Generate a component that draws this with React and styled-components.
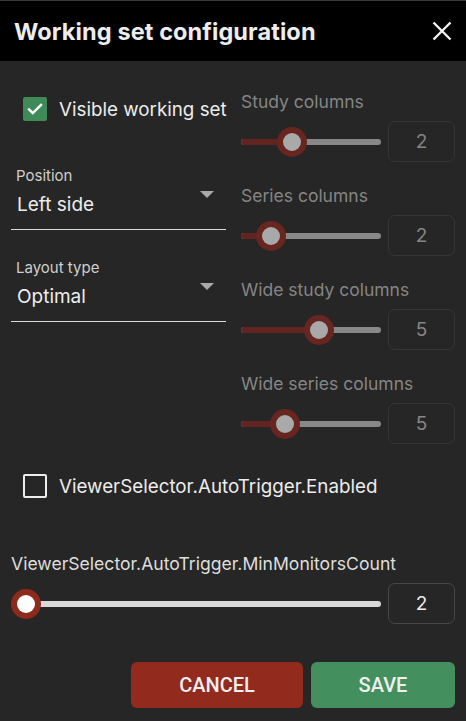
import React from 'react';
import styled, { createGlobalStyle } from 'styled-components';

const GlobalStyle = createGlobalStyle`
  html, body {
    margin: 0;
    padding: 0;
    background: #262626;
  }
  body {
    font-family: Inter, "Noto Sans", sans-serif;
    color: #ececec;
  }
`;

const Dialog = styled.div`
  width: 466px;
  height: 721px;
  background: #262626;
  display: flex;
  flex-direction: column;
`;

const Header = styled.div`
  height: 60px;
  border-top: 1px solid #3a3a3a;
  background: #000;
  display: flex;
  align-items: center;
  justify-content: space-between;
  padding: 0 14px;
  > h1 {
    margin: 0;
    font-size: 23.5px;
    font-weight: 700;
    letter-spacing: 0.1px;
    color: #ededed;
  }
  > svg {
    width: 20px;
    height: 20px;
    color: #f2f2f2;
  }
`;

const Body = styled.div`
  padding: 31px 11px 0 11px;
  display: flex;
  flex-direction: column;
`;

const Columns = styled.div`
  display: grid;
  grid-template-columns: 215px 1fr;
  column-gap: 15px;
`;

const LeftCol = styled.div`
  display: flex;
  flex-direction: column;
`;

const RightCol = styled.div`
  display: flex;
  flex-direction: column;
  gap: 24px;
`;

const CheckRow = styled.label`
  display: flex;
  align-items: center;
  gap: 12px;
  margin-left: 12px;
  margin-top: ${p => p.$top || 0}px;
  font-size: 18.8px;
  color: #ececec;
  height: 24px;
  white-space: nowrap;
`;

const Box = styled.span`
  width: 24px;
  height: 24px;
  box-sizing: border-box;
  border-radius: 2px;
  flex: none;
  display: flex;
  align-items: center;
  justify-content: center;
  background: ${p => (p.$checked ? '#3f8a59' : 'transparent')};
  border: ${p => (p.$checked ? 'none' : '2px solid #ececec')};
  > svg {
    width: 18px;
    height: 18px;
  }
`;

const SelectField = styled.div`
  margin-top: ${p => p.$top}px;
  display: flex;
  justify-content: space-between;
  padding: 0 12px 12px 5px;
  border-bottom: 1px solid #dcdcdc;
`;

const SelectText = styled.div`
  display: flex;
  flex-direction: column;
  > span {
    font-size: 15px;
    line-height: 16px;
    color: #cfcfcf;
  }
  > div {
    margin-top: 9px;
    font-size: 19px;
    line-height: 24px;
    color: #ededed;
    padding-left: 1px;
  }
`;

const Arrow = styled.span`
  margin-top: 23px;
  width: 0;
  height: 0;
  border-left: 7.5px solid transparent;
  border-right: 7.5px solid transparent;
  border-top: 7px solid #a9a9a9;
`;

const SliderGroup = styled.div`
  display: flex;
  flex-direction: column;
  gap: 9px;
`;

const GroupLabel = styled.div`
  font-size: 17.5px;
  line-height: 20px;
  color: ${p => (p.$disabled ? '#858585' : '#dedede')};
  white-space: nowrap;
`;

const SliderRow = styled.div`
  display: flex;
  align-items: center;
  gap: 7px;
`;

const Track = styled.div`
  position: relative;
  flex: 1;
  height: 6px;
  border-radius: 3px;
  background: ${p => (p.$disabled ? '#888888' : '#d9d9d9')};
`;

const Fill = styled.div`
  height: 100%;
  border-radius: 3px;
  background: ${p => (p.$disabled ? '#622420' : '#8c2a1e')};
`;

const Thumb = styled.span`
  position: absolute;
  top: 50%;
  width: 18px;
  height: 18px;
  border-radius: 50%;
  transform: translate(-50%, -50%);
  background: ${p => (p.$disabled ? '#a9a9a9' : '#ffffff')};
  box-shadow: 0 0 0 6px ${p => (p.$disabled ? '#672620' : '#8c2a1e')};
`;

const NumberBox = styled.div`
  width: 67px;
  height: 41px;
  box-sizing: border-box;
  border: 1px solid ${p => (p.$disabled ? '#363636' : '#474747')};
  border-radius: 7px;
  display: flex;
  align-items: center;
  justify-content: center;
  font-size: 19px;
  color: ${p => (p.$disabled ? '#868686' : '#ededed')};
`;

const MonitorsLabel = styled(GroupLabel)`
  font-size: 17.6px;
  margin-top: 56px;
`;

const Footer = styled.div`
  display: flex;
  justify-content: flex-end;
  gap: 8px;
  margin-top: 38px;
`;

const Button = styled.button`
  width: ${p => p.$w}px;
  height: 46px;
  border: none;
  border-radius: 6px;
  background: ${p => p.$bg};
  color: #efefef;
  font-family: Roboto, "Liberation Sans", sans-serif;
  font-size: 20px;
  font-weight: 500;
  text-transform: uppercase;
  cursor: pointer;
`;

function Slider({ pct, disabled }) {
  return (
    <Track $disabled={disabled}>
      <Fill $disabled={disabled} style={{ width: pct + '%' }} />
      <Thumb $disabled={disabled} style={{ left: pct + '%' }} />
    </Track>
  );
}

const columns = [
  { label: 'Study columns', value: 2, pct: 36.7 },
  { label: 'Series columns', value: 2, pct: 21.6 },
  { label: 'Wide study columns', value: 5, pct: 55.4 },
  { label: 'Wide series columns', value: 5, pct: 31.7 },
];

const CheckIcon = () => (
  <svg viewBox="0 0 24 24" fill="none" stroke="#fff" strokeWidth="3.2" strokeLinecap="square">
    <path d="M4 12.5l5 5L20 6.5" />
  </svg>
);

export default function App() {
  return (
    <>
      <GlobalStyle />
      <Dialog>
        <Header>
          <h1>Working set configuration</h1>
          <svg viewBox="0 0 20 20" fill="none" stroke="currentColor" strokeWidth="2.4">
            <path d="M1.5 1.5l17 17M18.5 1.5l-17 17" />
          </svg>
        </Header>
        <Body>
          <Columns>
            <LeftCol>
              <CheckRow $top={5}>
                <Box $checked><CheckIcon /></Box>
                Visible working set
              </CheckRow>
              <SelectField $top={47}>
                <SelectText>
                  <span>Position</span>
                  <div>Left side</div>
                </SelectText>
                <Arrow />
              </SelectField>
              <SelectField $top={30}>
                <SelectText>
                  <span>Layout type</span>
                  <div>Optimal</div>
                </SelectText>
                <Arrow />
              </SelectField>
            </LeftCol>
            <RightCol>
              {columns.map((c, i) => (
                <SliderGroup key={i}>
                  <GroupLabel $disabled>{c.label}</GroupLabel>
                  <SliderRow>
                    <Slider pct={c.pct} disabled />
                    <NumberBox $disabled>{c.value}</NumberBox>
                  </SliderRow>
                </SliderGroup>
              ))}
            </RightCol>
          </Columns>
          <CheckRow $top={30}>
            <Box />
            ViewerSelector.AutoTrigger.Enabled
          </CheckRow>
          <SliderGroup>
            <MonitorsLabel>ViewerSelector.AutoTrigger.MinMonitorsCount</MonitorsLabel>
            <SliderRow>
              <Slider pct={4.1} />
              <NumberBox>2</NumberBox>
            </SliderRow>
          </SliderGroup>
          <Footer>
            <Button $w={172} $bg="#922a1e">Cancel</Button>
            <Button $w={144} $bg="#438f5e">Save</Button>
          </Footer>
        </Body>
      </Dialog>
    </>
  );
}
